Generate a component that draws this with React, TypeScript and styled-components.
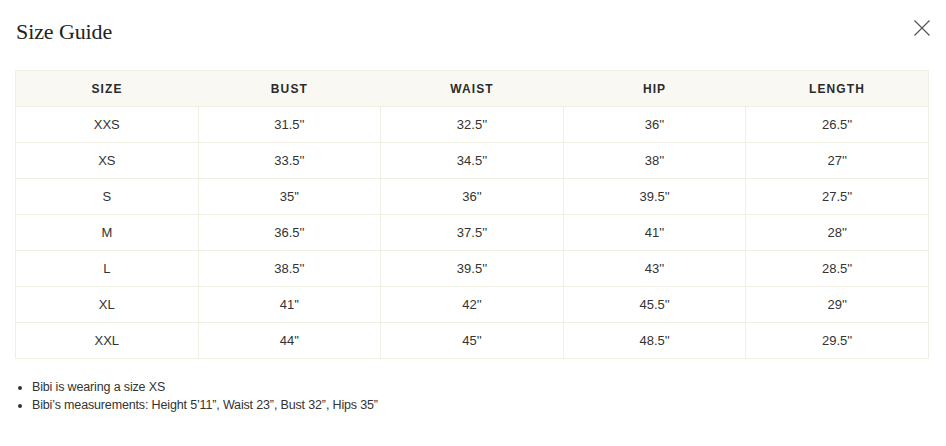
import React from "react";
import styled, { createGlobalStyle } from "styled-components";

const Global = createGlobalStyle`
  html, body { margin: 0; padding: 0; background: #fff; }
  body { font-family: "Liberation Sans", Arial, sans-serif; color: #333; }
`;

const Modal = styled.div`
  width: 946px;
  height: 446px;
  box-sizing: border-box;
  padding: 17px 16px 0 15px;
  display: flex;
  flex-direction: column;
`;

const Header = styled.div`
  display: flex;
  justify-content: space-between;
  align-items: flex-start;
  height: 53px;
`;

const Title = styled.h2`
  margin: 0;
  padding-left: 1px;
  font-family: "Liberation Serif", "Times New Roman", serif;
  font-weight: 400;
  font-size: 22px;
  line-height: 30px;
  color: #222;
  letter-spacing: -0.1px;
`;

const Close = styled.button`
  border: 0;
  background: none;
  padding: 0;
  margin: 3px 0 0 0;
  width: 16px;
  height: 16px;
  display: flex;
  cursor: pointer;
`;

const Table = styled.table`
  width: 914px;
  border-collapse: collapse;
  table-layout: fixed;
  border: 1px solid #f1eee3;
`;

const Th = styled.th`
  background: #faf8f3;
  height: 35px;
  padding: 0;
  font-size: 12px;
  font-weight: 700;
  letter-spacing: 1.1px;
  color: #2b2b2b;
  text-align: center;
`;

const Td = styled.td`
  height: 35px;
  padding: 0;
  border: 1px solid #f1eee3;
  font-size: 13px;
  color: #333;
  text-align: center;
`;

const Notes = styled.ul`
  margin: 19px 0 0 0;
  padding-left: 17px;
  font-size: 12.5px;
  line-height: 18px;
  letter-spacing: -0.15px;
  color: #333;
`;

const headers = ["SIZE", "BUST", "WAIST", "HIP", "LENGTH"];
const rows = [
  ["XXS", "31.5''", "32.5''", "36''", "26.5''"],
  ["XS", "33.5''", "34.5''", "38''", "27''"],
  ["S", "35''", "36''", "39.5''", "27.5''"],
  ["M", "36.5''", "37.5''", "41''", "28''"],
  ["L", "38.5''", "39.5''", "43''", "28.5''"],
  ["XL", "41''", "42''", "45.5''", "29''"],
  ["XXL", "44''", "45''", "48.5''", "29.5''"],
];

export default function App() {
  return (
    <>
      <Global />
      <Modal>
        <Header>
          <Title>Size Guide</Title>
          <Close aria-label="Close">
            <svg width="16" height="16" viewBox="0 0 16 16">
              <path d="M0.5 0.5L15.5 15.5M15.5 0.5L0.5 15.5" stroke="#555" strokeWidth="1.2" fill="none" />
            </svg>
          </Close>
        </Header>
        <Table>
          <thead>
            <tr>
              {headers.map((h) => (
                <Th key={h}>{h}</Th>
              ))}
            </tr>
          </thead>
          <tbody>
            {rows.map((r) => (
              <tr key={r[0]}>
                {r.map((c, i) => (
                  <Td key={i}>{c}</Td>
                ))}
              </tr>
            ))}
          </tbody>
        </Table>
        <Notes>
          <li>Bibi is wearing a size XS</li>
          <li>Bibi’s measurements: Height 5’11”, Waist 23”, Bust 32”, Hips 35”</li>
        </Notes>
      </Modal>
    </>
  );
}
